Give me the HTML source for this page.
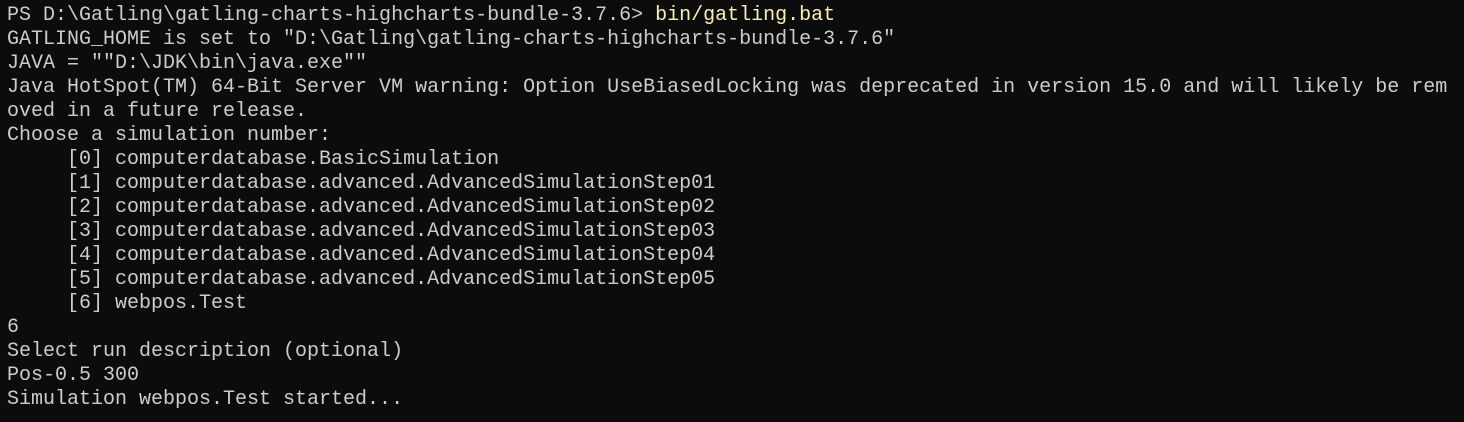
<!DOCTYPE html>
<html><head><style>
html,body{margin:0;padding:0;background:#0c0c0c;width:1464px;height:422px;overflow:hidden}
pre{margin:0;padding:4px 0 0 7px;font-family:"Liberation Mono",monospace;font-size:20px;line-height:24px;color:#cccccc;white-space:pre}
.y{color:#f9f1a5}
</style></head><body><pre>PS D:\Gatling\gatling-charts-highcharts-bundle-3.7.6> <span class="y">bin/gatling.bat</span>
GATLING_HOME is set to "D:\Gatling\gatling-charts-highcharts-bundle-3.7.6"
JAVA = ""D:\JDK\bin\java.exe""
Java HotSpot(TM) 64-Bit Server VM warning: Option UseBiasedLocking was deprecated in version 15.0 and will likely be rem
oved in a future release.
Choose a simulation number:
     [0] computerdatabase.BasicSimulation
     [1] computerdatabase.advanced.AdvancedSimulationStep01
     [2] computerdatabase.advanced.AdvancedSimulationStep02
     [3] computerdatabase.advanced.AdvancedSimulationStep03
     [4] computerdatabase.advanced.AdvancedSimulationStep04
     [5] computerdatabase.advanced.AdvancedSimulationStep05
     [6] webpos.Test
6
Select run description (optional)
Pos-0.5 300
Simulation webpos.Test started...</pre></body></html>
